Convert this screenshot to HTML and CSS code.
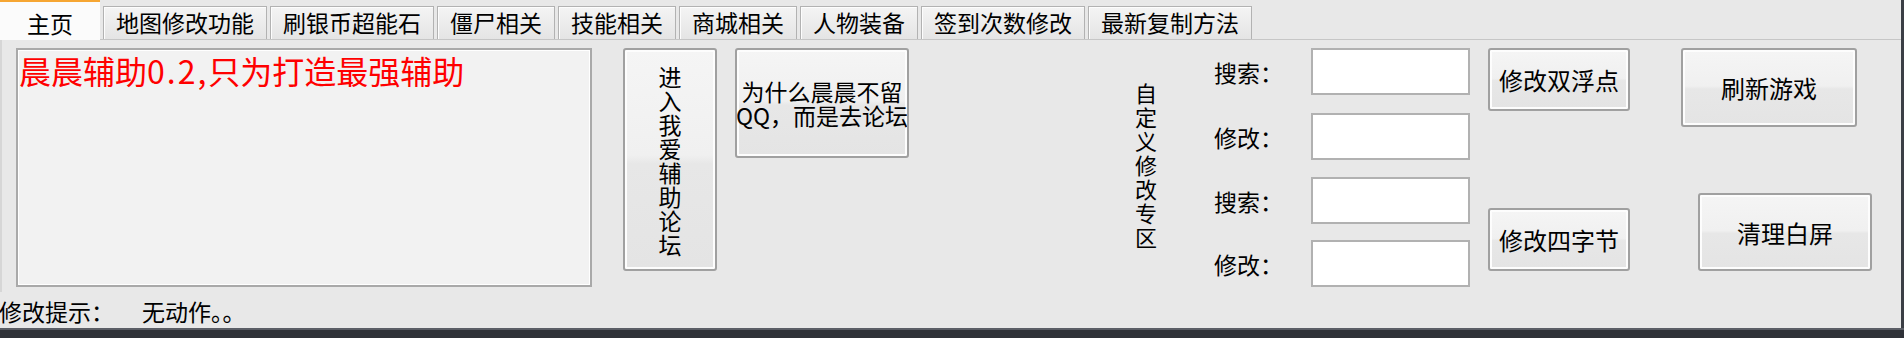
FILE: index.html
```html
<!DOCTYPE html>
<html lang="zh-CN">
  <head>
    <meta charset="UTF-8" />
    <title>晨晨辅助</title>
    <link rel="stylesheet" href="styles.css">
  </head>
  <body>
    <div class="window">
      <!-- tab strip -->
      <div class="tabs">
        <div class="tab active">主页</div>
        <div class="tab wide">地图修改功能</div>
        <div class="tab wide">刷银币超能石</div>
        <div class="tab">僵尸相关</div>
        <div class="tab">技能相关</div>
        <div class="tab">商城相关</div>
        <div class="tab">人物装备</div>
        <div class="tab wide">签到次数修改</div>
        <div class="tab wide">最新复制方法</div>
      </div>

      <!-- main tab page -->
      <div class="page">
        <div class="memo">晨晨辅助<span class="num">0.2,</span>只为打造最强辅助</div>

        <button class="btn btn-forum"><span class="vtext">进入我爱辅助论坛</span></button>

        <button class="btn btn-qq">为什么晨晨不留<br />QQ，而是去论坛</button>

        <div class="zone-title">自定义修改专区</div>

        <div class="fields">
          <div class="field row1">
            <label>搜索：</label>
            <input type="text" />
          </div>
          <div class="field row2">
            <label>修改：</label>
            <input type="text" />
          </div>
          <div class="field row3">
            <label>搜索：</label>
            <input type="text" />
          </div>
          <div class="field row4">
            <label>修改：</label>
            <input type="text" />
          </div>
        </div>

        <div class="col-edit">
          <button class="btn btn-edit">修改双浮点</button>
          <button class="btn btn-edit">修改四字节</button>
        </div>

        <div class="col-game">
          <button class="btn btn-refresh">刷新游戏</button>
          <button class="btn btn-clear">清理白屏</button>
        </div>
      </div>

      <!-- status line -->
      <div class="status">
        <span class="status-label">修改提示：</span>
        <span class="status-text">无动作。。</span>
      </div>
    </div>
    <div class="taskbar"></div>
  </body>
</html>
```

FILE: styles.css
```css
/* Basic styling */
* {
  margin: 0;
  padding: 0;
  box-sizing: border-box;
}
body {
  width: 1904px;
  height: 338px;
  overflow: hidden;
  background-color: #e8e8e8;
  color: #000;
  font-family: "Noto Sans CJK SC", sans-serif;
  display: flex;
  flex-direction: column;
}
.window {
  flex: 1;
  display: flex;
  flex-direction: column;
  border-right: 3px solid #3b3e45;
}

/* tabs */
.tabs {
  height: 40px;
  display: flex;
  align-items: flex-end;
  gap: 3px;
  border-bottom: 1px solid #c6c6c6;
}
.tab {
  width: 118px;
  height: 33px;
  font-size: 23px;
  line-height: 31px;
  text-align: center;
  white-space: nowrap;
  border: 1px solid #b2b2b2;
  border-bottom: none;
  background: linear-gradient(#f4f4f4, #e4e4e4);
  box-shadow: inset 1px 1px 0 #fdfdfd;
}
.tab.wide {
  width: 164px;
}
.tab.active {
  width: 100px;
  height: 40px;
  margin-bottom: -1px;
  line-height: 42px;
  background: #fbfbfb;
  border: none;
  border-top: 2px solid #f6a633;
  box-shadow: none;
  position: relative;
}

/* tab page */
.page {
  height: 252px;
  padding-top: 8px;
  display: flex;
  align-items: flex-start;
  border-left: 2px solid #d6d6d6;
}
.memo {
  margin-left: 14px;
  width: 576px;
  height: 239px;
  padding: 1px 1px;
  border: 2px solid #a9a9a9;
  box-shadow: inset 0 0 0 1px #fff;
  background-color: #f2f2f2;
  color: #ff0000;
  font-size: 32px;
  line-height: 38px;
  white-space: nowrap;
}
.memo .num {
  letter-spacing: 2px;
}

.btn {
  font-family: inherit;
  font-size: 24px;
  color: #000;
  border: 2px solid #a0a0a0;
  border-radius: 3px;
  background: linear-gradient(#f5f5f5 0%, #f0f0f0 48%, #e7e7e7 52%, #e4e4e4 100%);
  box-shadow: inset 0 0 0 2px #fdfdfd;
  display: flex;
  align-items: center;
  justify-content: center;
  overflow: hidden;
  white-space: nowrap;
}
.btn-forum {
  margin-left: 31px;
  width: 94px;
  height: 223px;
}
.vtext {
  width: 24px;
  font-size: 23px;
  line-height: 24px;
  white-space: normal;
  word-break: break-all;
}
.btn-qq {
  margin-left: 18px;
  width: 174px;
  height: 110px;
  font-size: 23px;
  line-height: 24px;
  text-align: center;
}

.zone-title {
  margin-left: 226px;
  margin-top: 32px;
  width: 23px;
  font-size: 22px;
  line-height: 24px;
  word-break: break-all;
}

.fields {
  margin-left: 56px;
  display: flex;
  flex-direction: column;
}
.field {
  display: flex;
  align-items: center;
}
.field label {
  width: 97px;
  font-size: 23px;
}
.field input {
  width: 159px;
  height: 47px;
  border: 2px solid #b1b1b1;
  background-color: #fff;
}
.row2 {
  margin-top: 18px;
}
.row3 {
  margin-top: 17px;
}
.row4 {
  margin-top: 16px;
}

.col-edit {
  margin-left: 18px;
  display: flex;
  flex-direction: column;
  gap: 97px;
}
.btn-edit {
  width: 142px;
  height: 63px;
}

.col-game {
  margin-left: 51px;
  display: flex;
  flex-direction: column;
}
.btn-refresh {
  width: 176px;
  height: 79px;
}
.btn-clear {
  margin-top: 66px;
  margin-left: 17px;
  width: 174px;
  height: 78px;
}

/* status line */
.status {
  flex: 1;
  display: flex;
  align-items: center;
  padding-top: 2px;
  font-size: 23px;
  white-space: nowrap;
}
.status-label {
  margin-left: -1px;
  width: 143px;
}

.taskbar {
  height: 10px;
  background-color: #2f3238;
  border-top: 2px solid #5b5e66;
}
```
